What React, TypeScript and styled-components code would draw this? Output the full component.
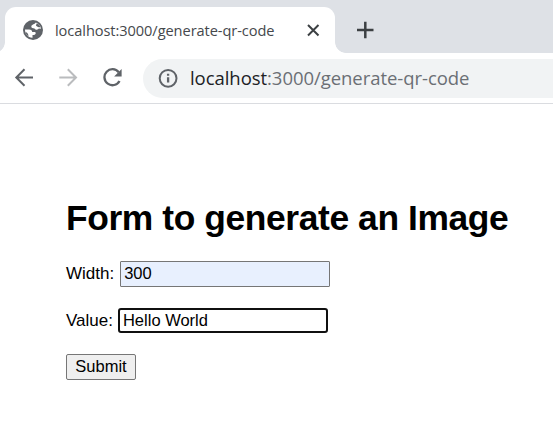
import React from "react";
import styled, { createGlobalStyle } from "styled-components";

const Global = createGlobalStyle`
  * { box-sizing: border-box; }
  body { margin: 0; background: #fff; overflow: hidden; }
`;

const Browser = styled.div`
  width: 553px;
  height: 423px;
  background: #fff;
  overflow: hidden;
`;

const TabStrip = styled.div`
  display: flex;
  height: 53px;
  padding: 7px 0 0 5px;
  background: #dee1e6;
`;

const Tab = styled.div`
  position: relative;
  display: flex;
  align-items: center;
  width: 330px;
  height: 46px;
  padding: 0 11px 0 18px;
  background: #fff;
  border-radius: 11px 11px 0 0;
  &::before, &::after {
    content: "";
    position: absolute;
    bottom: 0;
    width: 11px;
    height: 11px;
  }
  &::before {
    left: -11px;
    background: radial-gradient(circle at 0 0, transparent 10.5px, #fff 11.2px);
  }
  &::after {
    right: -11px;
    background: radial-gradient(circle at 100% 0, transparent 10.5px, #fff 11.2px);
  }
`;

const TabTitle = styled.span`
  flex: 1;
  margin-left: 12px;
  padding-bottom: 1px;
  font: 14.6px/20px "Open Sans", sans-serif;
  letter-spacing: -0.07px;
  color: #45484c;
  white-space: nowrap;
`;

const Icon = styled.svg`
  display: block;
  flex: none;
`;

const NewTab = styled.div`
  display: flex;
  align-items: center;
  height: 46px;
  margin-left: 21px;
`;

const Toolbar = styled.div`
  display: flex;
  align-items: center;
  height: 51px;
  padding-left: 14px;
  border-bottom: 1px solid #dadce0;
`;

const NavButtons = styled.div`
  display: flex;
  align-items: center;
  gap: 24px;
  width: 129px;
`;

const AddressBar = styled.div`
  display: flex;
  flex: 1;
  align-items: center;
  height: 39px;
  padding-left: 15px;
  background: #f1f3f4;
  border-radius: 20px 0 0 20px;
`;

const Address = styled.span`
  margin-left: 12px;
  font: 18.5px/26px "Open Sans", sans-serif;
  letter-spacing: -0.05px;
  color: #6b6f74;
  white-space: nowrap;
`;

const Host = styled.span`
  color: #202124;
`;

const Page = styled.main`
  padding: 93px 0 0 66px;
  font-family: "Liberation Sans", Arial, sans-serif;
  color: #000;
`;

const Heading = styled.h1`
  margin: 0;
  font-size: 35.4px;
  line-height: 42px;
  letter-spacing: -0.4px;
  white-space: nowrap;
`;

const Field = styled.label<{ $top: number; $gap: number }>`
  display: flex;
  align-items: center;
  gap: ${(p) => p.$gap}px;
  height: 26px;
  margin-top: ${(p) => p.$top}px;
  font-size: 17px;
`;

const Input = styled.input<{ $focused?: boolean }>`
  width: 210px;
  height: ${(p) => (p.$focused ? 25 : 26)}px;
  padding: ${(p) => (p.$focused ? "0 3px" : "0 3px 2px")};
  font: 16.5px "Liberation Sans", Arial, sans-serif;
  color: #000;
  border: ${(p) => (p.$focused ? "2px solid #101010" : "1px solid #767676")};
  border-radius: ${(p) => (p.$focused ? 3 : 1)}px;
  background: ${(p) => (p.$focused ? "#fff" : "#e8f0fe")};
  outline: none;
`;

const LabelText = styled.span`
  padding-top: 1px;
`;

const Submit = styled.button`
  display: block;
  width: 70px;
  height: 26px;
  margin-top: 21px;
  padding: 0 0 2px;
  font: 16.5px "Liberation Sans", Arial, sans-serif;
  color: #000;
  border: 1px solid #767676;
  border-radius: 2px;
  background: #efefef;
`;

export default function App() {
  return (
    <Browser>
      <Global />
      <TabStrip>
        <Tab>
          <Icon width="20" height="20" viewBox="0 0 20 20">
            <circle cx="10" cy="10" r="10" fill="#5f6368" />
            <path
              d="M12.8 2.5C12.3 4.2 8.5 4.2 8.3 6.5C8.2 8.3 10 8.4 11.5 8.4C12.2 9.9 15 10.3 15.8 8.6L18 8.8C17.8 6 15.8 3.4 12.8 2.5Z"
              fill="#fff"
            />
            <path
              d="M13.8 3.2C15.8 4 17.2 5.7 17.6 7.3H15.8C14.6 7.2 14.5 6.2 13.1 6C13.1 5.1 13.2 4.3 13.8 3.2Z"
              fill="#5f6368"
            />
            <path
              d="M2 9.6H6C8.4 9.6 9.1 10.5 9.2 12H11.5C13.3 12 13.1 14.7 11 14.9H9.5V17.8C5.2 18 1.9 14.2 2 9.6Z"
              fill="#fff"
            />
            <path d="M2.4 11.8C3.5 12.2 4.6 13.2 5.2 14.4L5.5 16.5C3.9 15.4 2.7 13.8 2.4 11.8Z" fill="#5f6368" />
          </Icon>
          <TabTitle>localhost:3000/generate-qr-code</TabTitle>
          <Icon width="20" height="20" viewBox="0 0 20 20" fill="none" stroke="#3c4043" strokeWidth="2">
            <path d="M4 5l10.5 10.5M14.5 5L4 15.5" />
          </Icon>
        </Tab>
        <NewTab>
          <Icon width="20" height="20" viewBox="0 0 20 20" fill="none" stroke="#3c4043" strokeWidth="2.5">
            <path d="M1 10h16.5M9.3 1.7v16.6" />
          </Icon>
        </NewTab>
      </TabStrip>
      <Toolbar>
        <NavButtons>
          <Icon width="20" height="20" viewBox="0 0 20 20" fill="none" stroke="#5f6368" strokeWidth="2">
            <path d="M19 9.5H2.8M10.5 1.3L2.3 9.5l8.2 8.2" />
          </Icon>
          <Icon width="20" height="20" viewBox="0 0 20 20" fill="none" stroke="#babcbe" strokeWidth="2">
            <path d="M1.3 9.5h16.2M9.8 1.3L18 9.5l-8.2 8.2" />
          </Icon>
          <Icon width="20" height="20" viewBox="0 0 20 20" fill="none">
            <path d="M16.7 4.2A8 8 0 1 0 17.5 13" stroke="#5f6368" strokeWidth="2.3" />
            <path d="M19.6 1v7.5h-7.5z" fill="#5f6368" />
          </Icon>
        </NavButtons>
        <AddressBar>
          <Icon width="20" height="20" viewBox="0 0 20 20" fill="none" stroke="#5f6368" strokeWidth="2">
            <circle cx="10.1" cy="10.3" r="8.4" />
            <path d="M10.1 9.3v5.2M10.1 5.8v2" strokeWidth="2.3" />
          </Icon>
          <Address>
            <Host>localhost</Host>:3000/generate-qr-code
          </Address>
        </AddressBar>
      </Toolbar>
      <Page>
        <Heading>Form to generate an Image</Heading>
        <Field $top={22} $gap={6}>
          Width:
          <Input defaultValue="300" />
        </Field>
        <Field $top={20} $gap={5}>
          <LabelText>Value:</LabelText>
          <Input $focused defaultValue="Hello World" />
        </Field>
        <Submit>Submit</Submit>
      </Page>
    </Browser>
  );
}
